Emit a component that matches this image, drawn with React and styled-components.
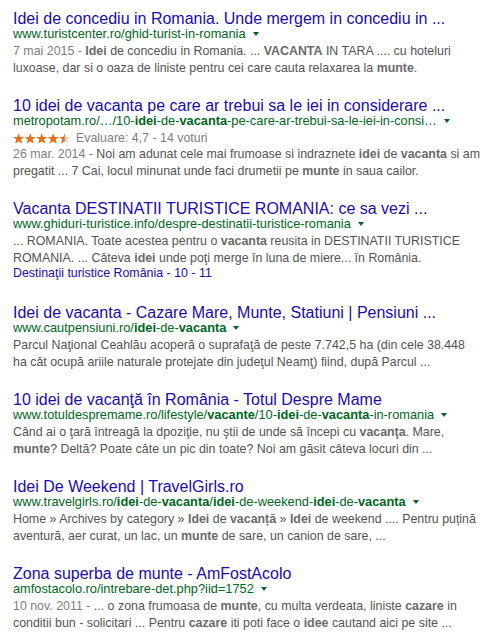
import React from 'react'
import styled, { createGlobalStyle } from 'styled-components'

const GlobalStyle = createGlobalStyle`
  body {
    margin: 0;
    background: #fff;
    font-family: "Liberation Sans", Arial, sans-serif;
  }
`

const Page = styled.div`
  padding: 11px 13px 0 13px;
  display: flex;
  flex-direction: column;
`
const Result = styled.div`
  margin-bottom: 22px;
`
const Title = styled.a`
  display: block;
  font-size: 16px;
  line-height: 16px;
  color: #1a0dab;
  text-decoration: none;
  white-space: nowrap;
`
const UrlRow = styled.div`
  display: flex;
  align-items: center;
  font-size: 12.8px;
  line-height: 14px;
  color: #006621;
  white-space: nowrap;
`
const UrlBold = styled.b`
  font-weight: bold;
`
const Caret = styled.span`
  display: inline-block;
  margin-left: 7px;
  width: 0;
  height: 0;
  border-left: 3px solid transparent;
  border-right: 3px solid transparent;
  border-top: 4px solid #006621;
`
const Snippet = styled.div`
  margin-top: ${props => props.top ?? 2}px;
  font-size: 12.4px;
  line-height: 16.5px;
  color: #545454;
`
const Line = styled.div`
  white-space: nowrap;
`
const Em = styled.b`
  font-weight: bold;
  color: #6a6a6a;
`
const Date = styled.span`
  color: #808080;
`
const Rating = styled.div`
  display: flex;
  align-items: center;
  gap: 5px;
  margin-top: 3px;
  font-size: 12.4px;
  line-height: 14px;
  color: #808080;
`
const Sitelink = styled.a`
  display: block;
  padding-bottom: 3px;
  font-size: 12.4px;
  line-height: 14px;
  color: #1a0dab;
  text-decoration: none;
`

const StarShape = ({ x, fill }) => (
  <path
    transform={`translate(${x} 0)`}
    d="M5.7 0.2 L7.2 3.9 L11.2 4.1 L8.1 6.6 L9.2 10.6 L5.7 8.4 L2.2 10.6 L3.3 6.6 L0.2 4.1 L4.2 3.9 Z"
    fill={fill}
  />
)

const Stars = () => (
  <svg width="58" height="11" viewBox="0 0 58 11">
    <defs>
      <clipPath id="half-star">
        <rect x="46" y="0" width="5.7" height="11" />
      </clipPath>
    </defs>
    {[0, 1, 2, 3].map(i => (
      <StarShape key={i} x={i * 11.5} fill="#e7711b" />
    ))}
    <StarShape x={46} fill="#d5d5d5" />
    <g clipPath="url(#half-star)">
      <StarShape x={46} fill="#e7711b" />
    </g>
  </svg>
)

const Url = ({ children }) => (
  <UrlRow>
    <span>{children}</span>
    <Caret />
  </UrlRow>
)

const App = () => {
  return (
    <Page>
      <GlobalStyle />

      <Result>
        <Title href="#">Idei de concediu in Romania. Unde mergem in concediu in ...</Title>
        <Url>www.turistcenter.ro/ghid-turist-in-romania</Url>
        <Snippet>
          <Line>
            <Date>7 mai 2015 - </Date><Em>Idei</Em> de concediu in Romania. ... <Em>VACANTA</Em> IN TARA .... cu hoteluri
          </Line>
          <Line>luxoase, dar si o oaza de liniste pentru cei care cauta relaxarea la <Em>munte</Em>.</Line>
        </Snippet>
      </Result>

      <Result>
        <Title href="#">10 idei de vacanta pe care ar trebui sa le iei in considerare ...</Title>
        <Url>
          metropotam.ro/…/10-<UrlBold>idei</UrlBold>-de-<UrlBold>vacanta</UrlBold>-pe-care-ar-trebui-sa-le-iei-in-consi…
        </Url>
        <Rating>
          <Stars />
          <span>Evaluare: 4,7 - 14 voturi</span>
        </Rating>
        <Snippet top={1}>
          <Line>
            <Date>26 mar. 2014 - </Date>Noi am adunat cele mai frumoase si indraznete <Em>idei</Em> de <Em>vacanta</Em> si am
          </Line>
          <Line>pregatit ... 7 Cai, locul minunat unde faci drumetii pe <Em>munte</Em> in saua cailor.</Line>
        </Snippet>
      </Result>

      <Result>
        <Title href="#">Vacanta DESTINATII TURISTICE ROMANIA: ce sa vezi ...</Title>
        <Url>www.ghiduri-turistice.info/despre-destinatii-turistice-romania</Url>
        <Snippet>
          <Line>... ROMANIA. Toate acestea pentru o <Em>vacanta</Em> reusita in DESTINATII TURISTICE</Line>
          <Line>ROMANIA. ... Câteva <Em>idei</Em> unde poţi merge în luna de miere... în România.</Line>
        </Snippet>
        <Sitelink href="#">Destinaţii turistice România - 10 - 11</Sitelink>
      </Result>

      <Result>
        <Title href="#">Idei de vacanta - Cazare Mare, Munte, Statiuni | Pensiuni ...</Title>
        <Url>
          www.cautpensiuni.ro/<UrlBold>idei</UrlBold>-de-<UrlBold>vacanta</UrlBold>
        </Url>
        <Snippet>
          <Line>Parcul Naţional Ceahlău acoperă o suprafaţă de peste 7.742,5 ha (din cele 38.448</Line>
          <Line>ha cât ocupă ariile naturale protejate din judeţul Neamţ) fiind, după Parcul ...</Line>
        </Snippet>
      </Result>

      <Result>
        <Title href="#">10 idei de vacanţă în România - Totul Despre Mame</Title>
        <Url>
          www.totuldespremame.ro/lifestyle/<UrlBold>vacante</UrlBold>/10-<UrlBold>idei</UrlBold>-de-<UrlBold>vacanta</UrlBold>-in-romania
        </Url>
        <Snippet>
          <Line>Când ai o ţară întreagă la dpoziţie, nu ştii de unde să începi cu <Em>vacanţa</Em>. Mare,</Line>
          <Line><Em>munte</Em>? Deltă? Poate câte un pic din toate? Noi am găsit câteva locuri din ...</Line>
        </Snippet>
      </Result>

      <Result>
        <Title href="#">Idei De Weekend | TravelGirls.ro</Title>
        <Url>
          www.travelgirls.ro/<UrlBold>idei</UrlBold>-de-<UrlBold>vacanta</UrlBold>/<UrlBold>idei</UrlBold>-de-weekend-<UrlBold>idei</UrlBold>-de-<UrlBold>vacanta</UrlBold>
        </Url>
        <Snippet>
          <Line>Home » Archives by category » <Em>Idei</Em> de <Em>vacanță</Em> » <Em>Idei</Em> de weekend .... Pentru puțină</Line>
          <Line>aventură, aer curat, un lac, un <Em>munte</Em> de sare, un canion de sare, ...</Line>
        </Snippet>
      </Result>

      <Result>
        <Title href="#">Zona superba de munte - AmFostAcolo</Title>
        <Url>amfostacolo.ro/intrebare-det.php?iid=1752</Url>
        <Snippet>
          <Line>
            <Date>10 nov. 2011 - </Date>... o zona frumoasa de <Em>munte</Em>, cu multa verdeata, liniste <Em>cazare</Em> in
          </Line>
          <Line>conditii bun - solicitari ... Pentru <Em>cazare</Em> iti poti face o <Em>idee</Em> cautand aici pe site ...</Line>
        </Snippet>
      </Result>
    </Page>
  )
}

export default App
